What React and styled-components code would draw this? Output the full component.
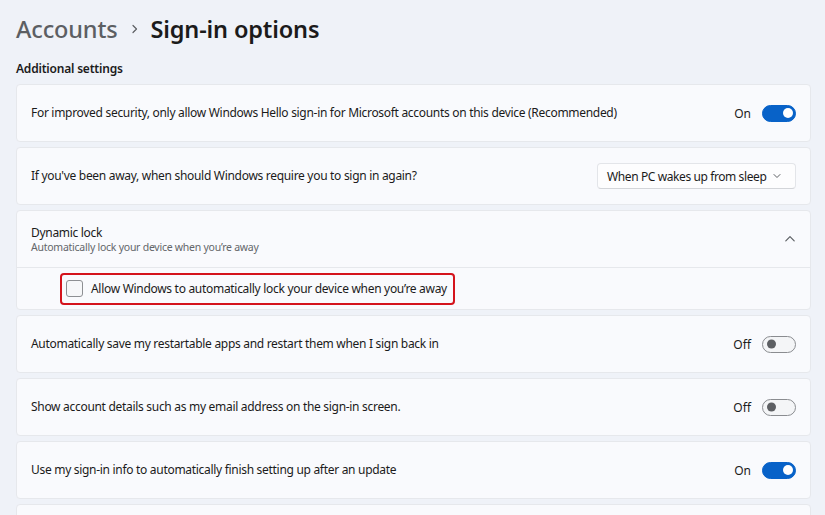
import React from "react"
import styled, { createGlobalStyle } from "styled-components"

const Global = createGlobalStyle`
  html, body {
    margin: 0;
    padding: 0;
    background: #eff2f8;
  }
  body {
    font-family: "Noto Sans", "Open Sans", sans-serif;
    color: #1b1b1b;
  }
`

const Page = styled.main`
  width: 825px;
  height: 515px;
  overflow: hidden;
  box-sizing: border-box;
  padding: 12px 14px 0 16px;
`

const Breadcrumb = styled.h1`
  display: flex;
  align-items: center;
  margin: 0;
  height: 34px;
  font-size: 23.5px;
  font-weight: 500;
  letter-spacing: -0.15px;

  .parent {
    color: #5c5f63;
  }
  .sep {
    display: flex;
    margin: 0 12px 0 13px;
    color: #5c5f63;
  }
  .current {
    color: #1b1b1b;
    font-weight: 600;
  }
`

const Section = styled.h2`
  margin: 15px 0 7px;
  font-size: 12px;
  font-weight: 600;
  line-height: 16px;
  letter-spacing: -0.2px;
  color: #1b1b1b;
`

const List = styled.div`
  display: flex;
  flex-direction: column;
  gap: 5px;
`

const Card = styled.div`
  background: #f9fafd;
  border: 1px solid #e6e8ec;
  border-radius: 4px;
  overflow: hidden;
`

const Row = styled.div`
  display: flex;
  align-items: center;
  justify-content: space-between;
  height: ${p => p.$h || 56}px;
  padding: 0 14px;
  box-sizing: border-box;
  border-top: ${p => (p.$divided ? "1px solid #e6e8ec" : "none")};
`

const Label = styled.div`
  font-size: 12px;
  line-height: 16px;
  color: #1b1b1b;
  letter-spacing: -0.3px;
  white-space: nowrap;
`

const Sub = styled.div`
  font-size: 10.5px;
  line-height: 13px;
  color: #63666a;
  letter-spacing: -0.25px;
`

const Control = styled.div`
  display: flex;
  align-items: center;
  gap: 11px;
  font-size: 12px;
  color: #1b1b1b;
`

const Switch = styled.span`
  position: relative;
  display: inline-block;
  width: 34px;
  height: 17px;
  box-sizing: border-box;
  border-radius: 9px;
  background: ${p => (p.$on ? "#0862c8" : "#f4f5f7")};
  border: 1px solid ${p => (p.$on ? "#0862c8" : "#8a8c90")};

  &::after {
    content: "";
    position: absolute;
    top: 50%;
    left: ${p => (p.$on ? "20px" : "4px")};
    width: ${p => (p.$on ? 10 : 9)}px;
    height: ${p => (p.$on ? 10 : 9)}px;
    border-radius: 50%;
    transform: translateY(-50%);
    background: ${p => (p.$on ? "#ffffff" : "#5d5f63")};
  }
`

const Select = styled.div`
  display: flex;
  align-items: center;
  justify-content: space-between;
  width: 199px;
  height: 26px;
  box-sizing: border-box;
  padding: 0 13px 0 9px;
  background: #fdfdfe;
  border: 1px solid #e3e5e9;
  border-bottom-color: #d3d5d9;
  border-radius: 4px;
  font-size: 12px;
  letter-spacing: -0.4px;
  white-space: nowrap;
  color: #1b1b1b;
`

const Highlight = styled.label`
  display: flex;
  align-items: center;
  gap: 8px;
  margin-left: 29px;
  height: 32px;
  padding: 0 6px 0 4px;
  box-sizing: border-box;
  border: 2px solid #d4131c;
  border-radius: 4px;
  font-size: 12px;
  letter-spacing: -0.3px;
  white-space: nowrap;
  color: #1b1b1b;
`

const Box = styled.span`
  width: 17px;
  height: 17px;
  box-sizing: border-box;
  border: 1px solid #8d8f93;
  border-radius: 3px;
  background: #f6f7f9;
`

const Chevron = ({ up, size = 10, color = "#5c5f63" }) => (
  <svg width={size} height={size} viewBox="0 0 10 10" fill="none">
    <path
      d={up ? "M1.5 6.5 L5 3 L8.5 6.5" : "M2 3.5 L5 6.5 L8 3.5"}
      stroke={color}
      strokeWidth="1"
      strokeLinecap="round"
      strokeLinejoin="round"
    />
  </svg>
)

const ToggleRow = ({ text, on }) => (
  <Card>
    <Row>
      <Label>{text}</Label>
      <Control>
        {on ? "On" : "Off"}
        <Switch $on={on} />
      </Control>
    </Row>
  </Card>
)

export default function App() {
  return (
    <Page>
      <Global />
      <Breadcrumb>
        <span className="parent">Accounts</span>
        <span className="sep">
          <svg width="8" height="10" viewBox="0 0 8 10" fill="none">
            <path d="M2 1.5 L5.5 5 L2 8.5" stroke="#5c5f63" strokeWidth="1.2" strokeLinecap="round" strokeLinejoin="round" />
          </svg>
        </span>
        <span className="current">Sign-in options</span>
      </Breadcrumb>
      <Section>Additional settings</Section>
      <List>
        <ToggleRow
          on
          text="For improved security, only allow Windows Hello sign-in for Microsoft accounts on this device (Recommended)"
        />
        <Card>
          <Row>
            <Label>If you've been away, when should Windows require you to sign in again?</Label>
            <Select>
              When PC wakes up from sleep
              <Chevron />
            </Select>
          </Row>
        </Card>
        <Card>
          <Row>
            <div>
              <Label>Dynamic lock</Label>
              <Sub>Automatically lock your device when you’re away</Sub>
            </div>
            <Control>
              <Chevron up size={12} />
            </Control>
          </Row>
          <Row $h={42} $divided>
            <Highlight>
              <Box />
              Allow Windows to automatically lock your device when you’re away
            </Highlight>
          </Row>
        </Card>
        <ToggleRow text="Automatically save my restartable apps and restart them when I sign back in" />
        <ToggleRow text="Show account details such as my email address on the sign-in screen." />
        <ToggleRow on text="Use my sign-in info to automatically finish setting up after an update" />
        <Card>
          <Row />
        </Card>
      </List>
    </Page>
  )
}
